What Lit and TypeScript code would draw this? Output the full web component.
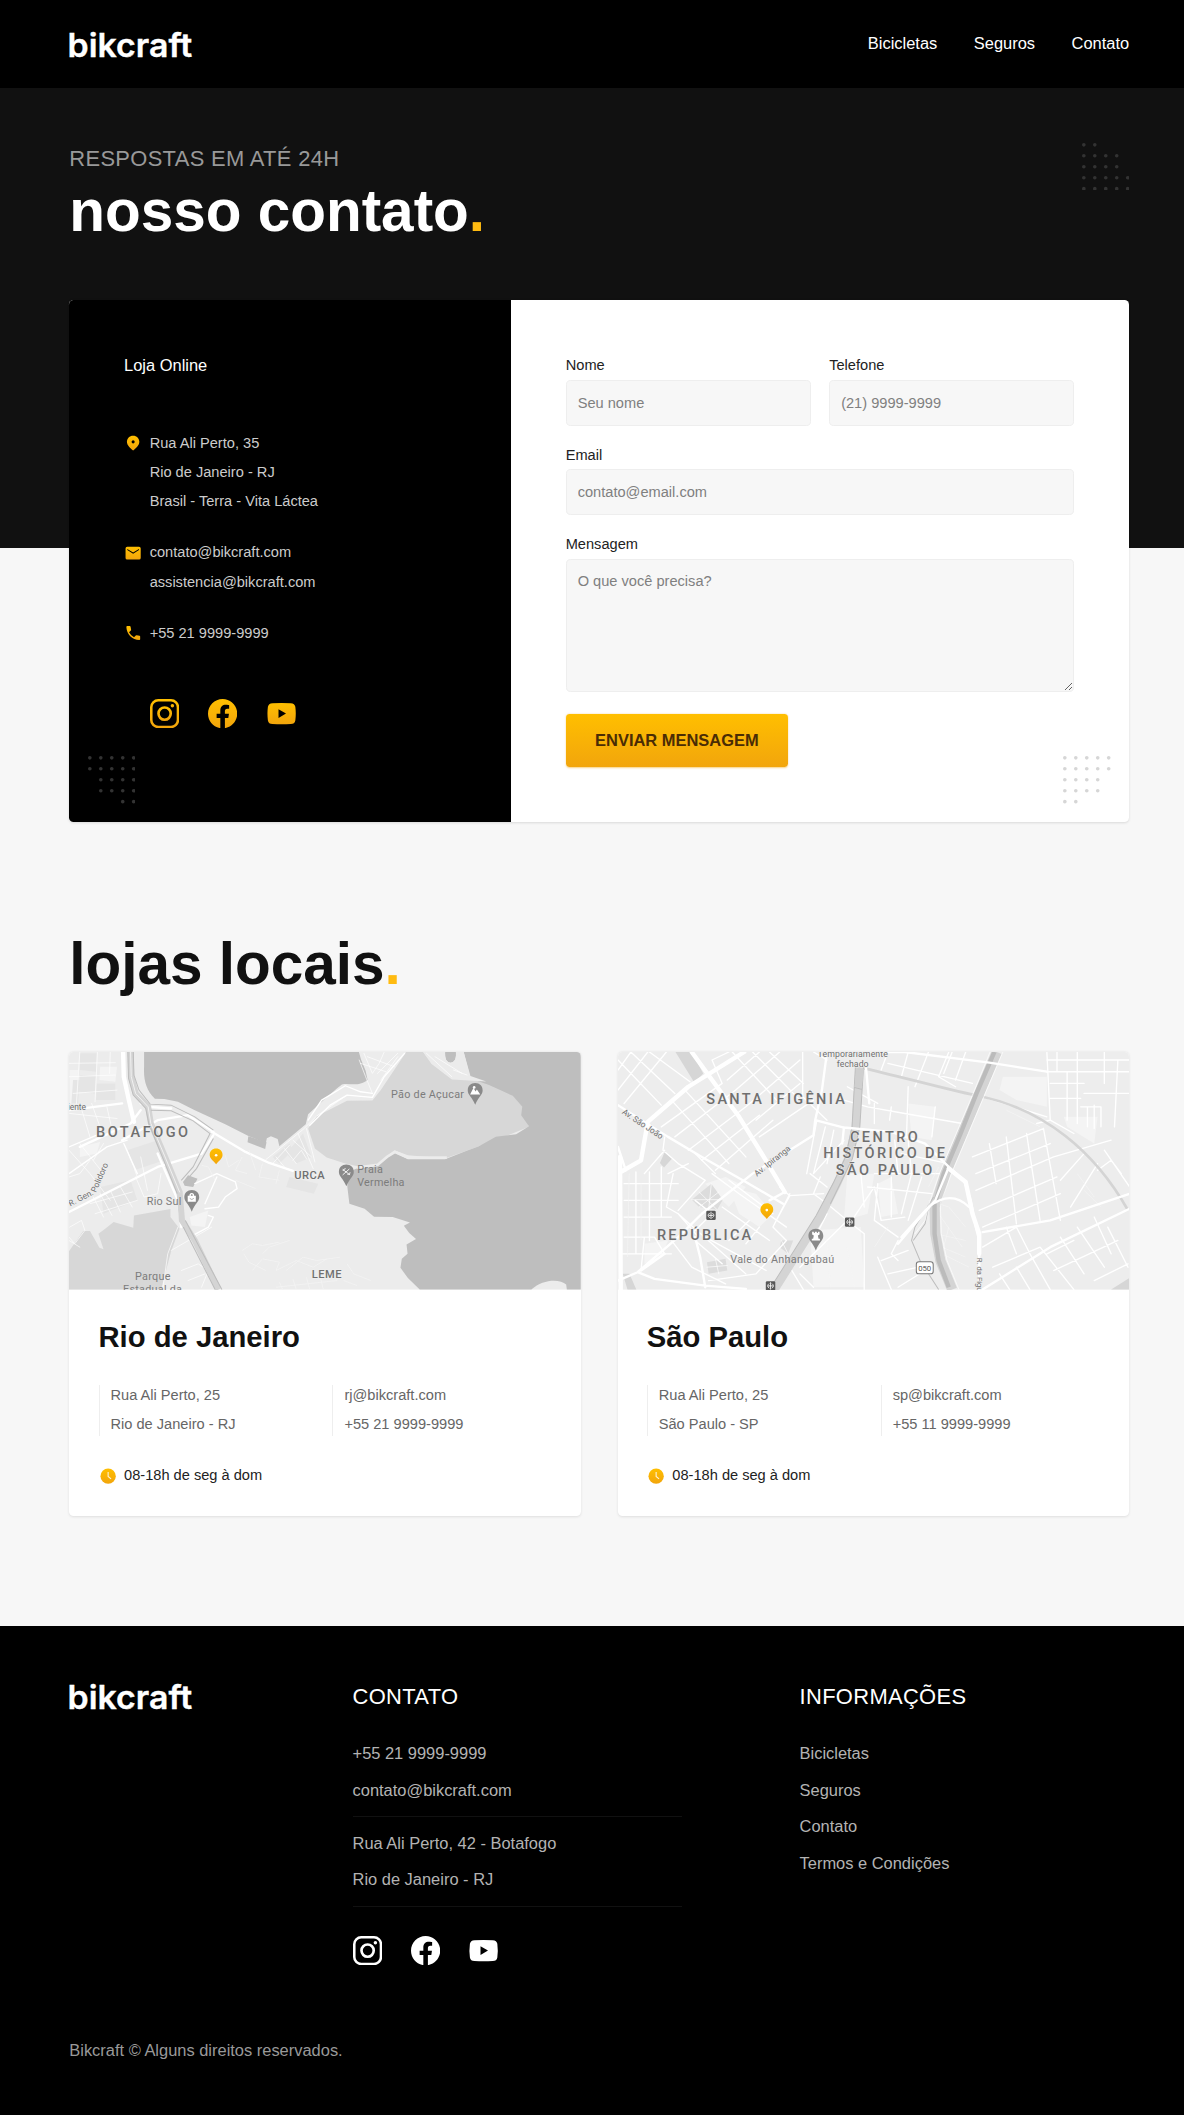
import { LitElement, html, svg, css } from "lit";
import { customElement, property } from "lit/decorators.js";

const goldGradient = svg`<defs>
  <linearGradient id="gold" x1="0" y1="0" x2="0" y2="1">
    <stop offset="0" stop-color="#ffbf00"></stop>
    <stop offset="1" stop-color="#f2a50c"></stop>
  </linearGradient>
</defs>`;

@customElement("bik-logo")
export class BikLogo extends LitElement {
  static styles = css`
    :host { display: block; }
    svg { display: block; overflow: visible; }
    .word { font: 600 36px Inter, "Liberation Sans", sans-serif; fill: #fff; stroke: #fff; stroke-width: 0.4; }
  `;
  render() {
    return html`<svg width="136" height="32" viewBox="0 0 136 32" role="img">
      <text class="word" x="-1.6" y="29.5" textLength="136.5" lengthAdjust="spacingAndGlyphs">bikcraft</text>
    </svg>`;
  }
}

/** Triangular dot ornament; each row is [first column, column count]. */
@customElement("bik-dots")
export class BikDots extends LitElement {
  static styles = css`
    :host { display: block; width: 52px; height: 52px; }
    svg { display: block; fill: currentColor; }
  `;
  @property({ attribute: false }) rows: [number, number][] = [];
  render() {
    return html`<svg width="52" height="52" viewBox="0 0 52 52">
      ${this.rows.map(([start, count], r) =>
        Array.from({ length: count }, (_, i) =>
          svg`<circle cx=${2 + (start + i) * 12} cy=${2 + r * 12} r="2"></circle>`
        )
      )}
    </svg>`;
  }
}

@customElement("bik-social")
export class BikSocial extends LitElement {
  static styles = css`
    :host { display: flex; gap: 32px; }
    svg { display: block; width: 32px; height: 32px; }
    .ink { fill: currentColor; }
    .line { fill: none; stroke: currentColor; }
    .gold { fill: url(#gold); }
    .gold-line { fill: none; stroke: url(#gold); }
  `;
  @property({ type: Boolean }) gold = false;
  render() {
    const fill = this.gold ? "gold" : "ink";
    const line = this.gold ? "gold-line" : "line";
    return html`
      <svg viewBox="0 0 32 32">${goldGradient}
        <rect class=${line} x="1.4" y="1.4" width="29.2" height="29.2" rx="7.6" stroke-width="2.8"></rect>
        <circle class=${line} cx="16" cy="16" r="6.7" stroke-width="2.9"></circle>
        <circle class=${fill} cx="24.5" cy="7.5" r="1.9"></circle>
      </svg>
      <svg viewBox="0 0 24 24">${goldGradient}
        <path class=${fill} d="M24 12.073c0-6.627-5.373-12-12-12s-12 5.373-12 12c0 5.99 4.388 10.954 10.125 11.854v-8.385H7.078v-3.47h3.047V9.43c0-3.007 1.792-4.669 4.533-4.669 1.312 0 2.686.235 2.686.235v2.953H15.83c-1.491 0-1.956.925-1.956 1.874v2.25h3.328l-.532 3.47h-2.796v8.385C19.612 23.027 24 18.062 24 12.073z"></path>
      </svg>
      <svg viewBox="0 0 32 32">${goldGradient}
        <path class=${fill} fill-rule="evenodd" d="M6 4.6Q16 4 26 4.6Q30.4 4.8 31 8.6Q32 16 31 23.4Q30.4 27.2 26 27.4Q16 28 6 27.4Q1.600 27.200 1 23.400Q0 16 1 8.600Q1.600 4.800 6 4.600ZM12.600 11.200V20.800L20.800 16Z"></path>
      </svg>`;
  }
}

@customElement("bik-icon")
export class BikIcon extends LitElement {
  static styles = css`
    :host { display: block; width: 20px; height: 20px; }
    svg { display: block; width: 20px; height: 20px; }
    .gold { fill: url(#gold); }
    .hands { fill: none; stroke: #fff; stroke-width: 1.2; stroke-opacity: 0.85; }
  `;
  @property() name = "";
  render() {
    const shapes: Record<string, unknown> = {
      pin: svg`<path class="gold" fill-rule="evenodd" d="M10 1.800C6 1.800 3.200 4.800 3.200 8.500C3.200 12.600 7.200 15.800 10 18.200C12.800 15.800 16.800 12.600 16.800 8.500C16.800 4.800 14 1.800 10 1.800ZM10 6.900A1.700 1.700 0 1 1 10 10.300A1.700 1.700 0 1 1 10 6.900Z"></path>`,
      mail: svg`<path class="gold" fill-rule="evenodd" d="M3.500 3H16.500A1.800 1.800 0 0 1 18.300 4.800V15.200A1.800 1.800 0 0 1 16.500 17H3.500A1.800 1.800 0 0 1 1.700 15.200V4.800A1.800 1.800 0 0 1 3.500 3ZM3.600 5.400V6.700L10 10.600L16.400 6.700V5.400L10 9.200Z"></path>`,
      phone: svg`<path class="gold" d="M2.600 3.200Q2.600 2.300 3.500 2.300H6.300Q7 2.300 7.200 3L7.800 6.200Q7.900 6.800 7.500 7.200L5.500 9.100Q7.500 12.700 11 14.600L12.900 12.600Q13.300 12.200 13.900 12.300L17 12.900Q17.700 13.100 17.700 13.800V16.600Q17.700 17.500 16.800 17.500C9 17.300 2.800 11 2.600 3.200Z"></path>`,
      clock: svg`<circle class="gold" cx="10" cy="10" r="8.400"></circle><path class="hands" d="M10 5.500V10.300L13.200 13"></path>`,
    };
    return html`<svg viewBox="0 0 20 20">${goldGradient}${shapes[this.name]}</svg>`;
  }
}

const mapStyles = css`
  :host { display: block; height: 260px; overflow: hidden; }
  svg { display: block; width: 100%; height: 100%; font-family: Roboto, "Liberation Sans", sans-serif; }
  .road { fill: none; stroke: #fff; stroke-linejoin: round; stroke-linecap: round; }
  .r1 { stroke-width: 2; }
  .r2 { stroke-width: 4; }
  .r3 { stroke-width: 7; }
  .r4 { stroke-width: 13; }
  .faint { fill: none; stroke: #f5f5f5; stroke-width: 2; }
  .gray { fill: none; stroke: #d4d4d4; }
  .dark { fill: none; stroke: #bdbdbd; stroke-width: 3; }
  .water { fill: #bebebe; }
  .hill { fill: #d7d7d7; }
  .patch { fill: #e5e5e5; }
  .light { fill: #f4f4f4; }
  .label { fill: #6f6f6f; stroke: #f0f0f0; stroke-width: 3; paint-order: stroke; }
  .poi { fill: #7c7c7c; }
  .bold { font-weight: 500; }
  .marker { fill: #8a8a8a; }
  .glyph { fill: #fff; }
  .gold { fill: url(#gold); }
  .metro { fill: #585858; }
  .metro-line { fill: none; stroke: #fff; stroke-width: 2.500; }
  .shield { fill: #fff; stroke: #777; stroke-width: 3; }
`;

const goldPin = (x: number, y: number) => svg`
  <g transform="translate(${x} ${y})">
    <path class="gold" d="M0 -22C-11 -22 -19 -14 -19 -3C-19 8 -8 14 0 25C8 14 19 8 19 -3C19 -14 11 -22 0 -22Z"></path>
    <circle class="glyph" cx="0" cy="-2" r="4"></circle>
  </g>`;

const grayPin = (x: number, y: number, glyph: unknown) => svg`
  <g transform="translate(${x} ${y})">
    <path class="marker" d="M0 -22C-13 -22 -22 -13 -22 0C-22 13 -10 18 0 43C10 18 22 13 22 0C22 -13 13 -22 0 -22Z"></path>
    ${glyph}
  </g>`;

@customElement("map-rio")
export class MapRio extends LitElement {
  static styles = mapStyles;
  render() {
    return html`<svg viewBox="28 36 1513 711" preserveAspectRatio="none">${goldGradient}
      <rect x="28" y="36" width="1513" height="711" fill="#ececec"></rect>
      <path class="light" d="M120 80L170 80 165 125 118 120ZM385 530L440 510 430 560 390 555ZM30 90L55 90 50 190 30 190ZM60 320L120 305 110 340 60 350Z"></path>
      <path class="patch" d="M60 40L110 40 108 95 60 90ZM60 105L108 108 104 160 58 155ZM110 130L165 130 165 180 108 180ZM200 330L290 300 310 360 220 390ZM120 440L210 420 230 480 130 520ZM680 410L765 430 752 460 670 440ZM670 340L720 280 745 350 700 370ZM630 350L680 310 690 330 650 370ZM40 120L60 120 55 190 35 190Z"></path>
      <path class="hill" d="M1025 36L1075 36 1100 70 1160 115 1260 120 1340 165 1368 200 1388 260 1330 284 1240 318 1140 355 1030 345 990 330 940 372 880 378 840 368 790 352 755 325 735 265 760 228 850 182 925 181 950 150Z"></path>
      <path class="water" d="M250 36H885L892 60 905 92 911 120C880 142 860 128 835 133C800 160 760 200 735 222L728 252 650 318 645 296 625 288 613 294 610 308 560 288 490 252 400 210 350 185 310 177 282 176C256 150 248 120 250 80Z"></path>
      <path class="water" d="M1195 36H1541V747H1500L1498 732C1480 715 1430 715 1395 747H1065L1030 712 1008 682 1012 655 1029 640 1026 612 1054 596 1034 578 1018 556 1036 546 985 530 930 529 902 505 857 490 851 440 850 405C870 378 900 384 940 376L968 352 992 338 1030 357 1140 357 1200 333 1240 318 1290 290 1350 282 1388 258 1365 225 1368 200 1340 167 1270 135 1215 115Z"></path>
      <path class="water" d="M1140 36H1172Q1175 66 1156 68Q1138 66 1140 36ZM365 425L380 405 408 415 395 440 370 436ZM558 288L612 306 608 326 556 306Z"></path>
      <path d="M880 382L940 374 968 350 992 335 1030 352 1145 352" fill="none" stroke="#ececec" stroke-width="8" stroke-linejoin="round"></path>
      <path d="M1075 36L1100 72 1160 118 1262 124 1215 108 1195 36H1172Q1175 66 1156 68Q1138 66 1140 36Z" fill="#ebebeb"></path>
      <path class="hill" d="M28 632L70 572 90 572 118 622 130 626 115 580 135 565 160 545 218 562 220 525 328 506 328 530 355 565 330 632 300 747H28Z"></path>

      <path class="road r1" d="M60 36L50 190M112 36L105 185M150 36L148 100M28 70L165 68M28 110L165 105M40 160L170 150M30 220L170 235M60 190L90 290M95 190L130 290M140 200L160 290M28 330L90 400 150 480M60 310L130 400M90 360L60 400 28 410M130 310L100 360M100 470L130 530M120 460L155 525M150 450L180 515M180 440L215 500M90 490L215 455M105 520L230 480M225 410L250 470 290 460 300 400M240 350L260 450M200 330L230 410M30 560L65 540 75 570 45 610 28 590M28 600L60 620M330 630L450 560M350 560L320 640 305 747M360 690L410 670 440 690 420 740M380 720L430 700"></path>
      <path class="road r1" d="M610 358L720 268 760 228 850 165M640 350L665 380M665 325L700 370M690 300L745 350M705 280L750 385M730 265L755 365M630 370L680 315M690 360L715 330 730 355M886 60L905 110 925 160M900 40L925 100 945 70 960 36M890 70L965 95M910 50L990 80M940 100L1000 40M1000 50L950 120M1085 40L1160 110M1110 50L1190 100M1165 90L1205 105"></path>
      <path class="road r2" d="M400 430L465 400 520 425 525 445 490 470 470 500 430 505M430 490L465 410M440 525L455 530 440 560 385 590M28 320L110 285M28 400L140 320 200 300M190 310L230 400"></path>
      <path class="road r2" d="M735 240L775 180 845 137 890 155 925 160M740 255L800 195 850 165 925 172 960 110 1020 40"></path>
      <path class="road r3" d="M28 515L290 380 420 340 455 285M28 210L185 190M185 300L290 240 380 225 455 275M60 320L210 250 240 210M290 340L350 480 360 560"></path>
      <path class="road r4" d="M188 36L190 110 205 180 220 245"></path>
      <path class="road r3" d="M450 275L550 335 620 368 690 392M240 190L265 200 330 205"></path>
      <path class="gray" stroke-width="18" d="M210 36L212 110 225 160 262 200 270 250 310 345 355 455 362 540 400 600 470 747"></path>
      <path class="dark" d="M202 36L204 115 218 165 255 205 264 250 304 350 348 460 M366 560L460 747M372 540L480 747M218 36L220 105 235 150 268 192 330 195 400 230 455 270M270 210L330 212 395 242 445 280 395 380 360 420M455 295L405 385 370 425"></path>
      <path class="road r1" d="M210 36L212 110 225 160 262 200 270 250 310 345 355 455"></path>
      <path class="faint" d="M460 420L440 380 420 375M490 345L500 380 530 360M540 350L520 390 555 400M560 330L580 390M520 420L580 445M600 370L590 410 650 420M650 390L640 430M540 630L570 610 600 615 650 605M545 640L560 665 610 690M570 690L600 655 650 665 640 690 700 660 750 680 790 655M600 640L620 620 680 600M670 690L720 650 760 660 830 650M850 670L870 700 920 720M640 740L820 720 825 700M650 725L660 747M690 715L700 747M730 710L740 747M770 705L780 747M840 720L880 735"></path>

      <text class="label bold" x="108" y="290" font-size="43" textLength="272">BOTAFOGO</text>
      <text class="label bold" x="694" y="417" font-size="33" textLength="90">URCA</text>
      <text class="label bold" x="746" y="711" font-size="33" textLength="88">LEME</text>
      <text class="poi" x="980" y="173" font-size="32" textLength="216">Pão de Açucar</text>
      <text class="poi" x="880" y="399" font-size="32" textLength="76">Praia</text>
      <text class="poi" x="880" y="437" font-size="32" textLength="140">Vermelha</text>
      <text class="poi" x="258" y="494" font-size="32" textLength="102">Rio Sul</text>
      <text class="poi" x="223" y="719" font-size="32" textLength="105">Parque</text>
      <text class="poi" x="188" y="757" font-size="32" textLength="174">Estadual da</text>
      <text class="label" x="24" y="210" font-size="25">iente</text>
      <text class="label" font-size="25" transform="translate(32 498) rotate(-27)">R. Gen.</text>
      <text class="label" font-size="25" transform="translate(108 458) rotate(-67)">Polidoro</text>
      ${grayPin(1229, 151, svg`<path class="glyph" d="M-15 12L-5 -8L1 3L5 -3L15 12Z"></path><circle class="glyph" cx="-3" cy="-9" r="4"></circle>`)}
      ${grayPin(848, 395, svg`<path d="M-11 9L9 -9M-11 -8L11 9M-10 -3A9 9 0 0 1 -2 -10M3 7A6 6 0 0 0 11 1" fill="none" stroke="#fff" stroke-width="2.6"></path>`)}
      ${grayPin(391, 471, svg`<path class="glyph" d="M-12 -5H12V13H-12ZM-7 -5A7 8 0 0 1 7 -5H3A3 4 0 0 0 -3 -5Z"></path><path d="M-6 3Q0 10 6 3" fill="none" stroke="#8a8a8a" stroke-width="2"></path>`)}
      ${goldPin(463, 347)}
    </svg>`;
  }
}

@customElement("map-sampa")
export class MapSampa extends LitElement {
  static styles = mapStyles;
  render() {
    const metro = (x: number, y: number) => svg`<g transform="translate(${x} ${y})">
      <rect class="metro" x="-14" y="-14" width="28" height="28" rx="4"></rect>
      <path class="metro-line" d="M0 -11V11M-4 -7Q-13 0 -4 7M4 -7Q13 0 4 7M-7 0H7"></path></g>`;
    return html`<svg viewBox="22 36 1513 711" preserveAspectRatio="none">${goldGradient}
      <rect x="22" y="36" width="1513" height="711" fill="#ededed"></rect>
      <path class="light" d="M1160 110L1290 110 1290 200 1200 180 1150 150ZM350 440L430 460 480 520 440 560 380 520ZM590 570L740 560 750 740 600 740ZM790 430L830 410 850 520 800 530ZM280 430L340 410 400 440 350 500ZM1340 230L1440 230 1430 310 1350 260ZM880 190L960 200 950 300 890 290ZM100 610L170 600 150 650 100 670ZM700 400L780 400 760 520 690 540Z"></path>
      <path d="M192 36L240 36 274 100 248 128ZM36 700L56 700 76 747 50 747ZM1480 747L1535 712V747ZM160 335L182 355 158 382 146 368Z" fill="#d6d6d6"></path>
      <path d="M240 478L298 430 332 478 315 508 262 500ZM505 600L540 600 525 640 500 620ZM285 665L340 655 345 690 290 700Z" fill="#dcdcdc"></path>
      <path class="road r1" d="M240 478L332 478M298 430L290 508M262 455L315 508M320 455L262 500M505 600L525 640M285 680L345 675M310 655L320 700"></path>

      <path class="road r2" d="M22 90L60 36M22 150L110 36M40 190L165 36M22 60L150 195M60 36L190 160M115 36L235 125M150 260L330 130M190 290L370 150M230 330L400 200M270 360L440 225M310 390L480 240M180 180L350 370M220 150L400 350M330 130L300 60 350 36M345 120L440 36M370 150L500 36M400 200L560 60M430 240L560 130M360 36L500 190M420 36L560 180M470 36L570 130M568 36V170L640 240M440 290L600 180M600 36L640 60"></path>
      <path class="road r2" d="M40 430L200 430M40 480L200 480M40 530L180 530M40 590L130 590M75 395V640M115 395V600M150 380V530M185 400L165 500 200 520 260 590M36 640L180 640M100 400L160 330M160 290L155 330 200 370M200 370L280 420 200 510M250 340L310 400M230 370L170 400M300 400L380 460 520 560M350 420L480 520M330 500L470 600M200 520L400 700M250 480L300 520M280 590L460 690M300 520L240 580M180 600L240 680 340 730M130 590L160 640M100 590L90 690M250 600L330 670M410 540L350 600M440 560L400 610M530 460L480 560 520 600 430 700 290 720M620 410L600 460 640 490M530 466L630 460M500 440L530 466 490 540M590 400L640 440M610 240L580 400M635 260L600 400 690 300M660 270L640 370M690 180L760 200 870 220 1040 250M700 140L790 190M780 190V250M830 200L825 240M880 140L875 290M960 200L950 290M700 560L780 440 800 540 870 530M750 500L740 400M790 430L780 540 850 590M830 410L830 530M890 400L860 520M920 410L880 540M840 300L850 400M880 300L890 400M780 400L980 400M760 440L950 460M860 340L1000 370M640 490L700 540 750 580V747M700 540L560 680M640 520L600 600M560 700L600 740M530 680L570 747M790 650L830 747M800 660L880 630M820 700L910 680M850 740L930 690M850 600L830 640 850 660"></path>
      <path class="road r2" d="M820 36L800 90M880 36L860 110M940 36L900 140M1000 36L970 110 1020 140M820 70L1070 130M1010 36L985 100M1050 36L1020 120M1100 170L1290 230M1290 36L1300 240 1260 250M1290 95H1535M1290 60H1535M1380 36V250M1460 36V130M1500 60L1490 260M1300 130H1400M1300 175H1390M1320 36V95M1350 95V240M1390 200H1450M1400 160H1535M1410 200V260M1430 195V265M1450 200V260M1300 240L1370 280M1070 350L1280 265M1080 400L1300 310M1080 450L1310 350M1090 510L1320 410M1100 560L1330 460M1120 310L1140 430M1170 290L1200 550M1230 280L1270 540M1280 265L1330 540M1310 350L1480 300M1330 420L1400 340M1360 500L1440 370M1100 620L1200 560 1240 640M1130 680L1270 620M1170 560L1200 640M1240 640L1300 747M1270 620L1370 747M1330 590L1400 700M1380 560L1460 680M1430 530L1480 640M1290 640L1370 600M1310 690L1500 600M1470 560L1530 680M1430 720L1530 670M1180 747L1150 700M1240 747L1200 680M1440 390L1480 360 1510 400M1460 330L1535 440"></path>
      <path class="faint" d="M940 480L1000 500 1050 560M970 520L1040 620M1000 560L980 640 1060 680M960 580L1050 600M980 620L1050 650M1170 210L1270 260M970 380L940 440M820 560L780 620M1400 450L1450 500M1380 400L1430 470M55 400L50 650M90 430V600M700 620L720 740M640 600L650 740"></path>

      <path class="gray" stroke-width="8" d="M750 85C900 120 1000 150 1100 170C1280 210 1430 330 1530 510"></path>
      <path class="gray" stroke-width="24" d="M736 80L725 260 705 350 670 430 620 530 485 747"></path>
      <path class="dark" d="M724 80L714 260 695 350 660 425 608 525 470 747M748 80L737 260 715 355 650 490M722 142L744 148"></path>
      <path d="M738 85L732 142" stroke="#cfcfcf" stroke-width="22"></path>
      <path class="gray" stroke-width="30" d="M1142 36L1090 160 1040 280 990 400 958 500 960 580 975 660 1010 747"></path>
      <path d="M1135 36L1082 160 1035 280 985 400 962 480 M958 490L958 580 970 660 1000 740" fill="none" stroke="#bbb" stroke-width="13"></path>
      <path class="dark" d="M940 500L930 550 895 600 M955 470L900 560 890 600 915 660 970 747"></path>
      <path class="road r1" d="M1122 36L1072 160 1022 280 972 400 942 490 930 540 900 580 M1160 36L1108 160 1058 280 1008 400 975 490 978 580 995 660 1030 747"></path>

      <path class="road r4" d="M240 36L300 120 380 230 450 345 515 455M22 400L90 360 110 245 230 140 395 36M28 350L30 747"></path>
      <path class="road r3" d="M22 195L170 290 270 350 400 425 510 490M270 520L420 400 600 285M515 455L470 480M22 320L45 390M640 36L625 150 605 240 600 285M605 240L690 262 830 275M690 262L685 310M22 720L80 695 200 590 270 520M80 695L130 715 280 735 400 745M250 590L265 650 280 740M160 640L90 690"></path>
      <path class="road r3" d="M770 36H870L1120 68 1290 95M755 80L765 190M830 275L930 310 1000 380 1045 420 1065 480 1080 560 1090 600V747M860 590L940 500C990 460 1030 470 1060 500M1100 575L1300 540 1535 460M1100 747L1300 620 1535 505M1000 380L960 480 900 550 850 610"></path>
      <path class="road r4" d="M1000 385L1050 425 1070 520 1090 580 1090 640"></path>

      <text class="label bold" x="283" y="191" font-size="43" textLength="410">SANTA IFIGÊNIA</text>
      <text class="label bold" x="708" y="306" font-size="43" textLength="200">CENTRO</text>
      <text class="label bold" x="629" y="354" font-size="43" textLength="360">HISTÓRICO DE</text>
      <text class="label bold" x="666" y="403" font-size="43" textLength="285">SÃO PAULO</text>
      <text class="label bold" x="137" y="600" font-size="43" textLength="279">REPÚBLICA</text>
      <text class="poi" x="354" y="667" font-size="32" textLength="307">Vale do Anhangabaú</text>
      <text class="label" x="612" y="51" font-size="26" textLength="208">Temporariamente</text>
      <text class="label" x="669" y="81" font-size="26" textLength="94">fechado</text>
      <text class="label" font-size="25" textLength="140" transform="translate(32 219) rotate(34)">Av. São João</text>
      <text class="label" font-size="25" textLength="130" transform="translate(433 409) rotate(-39)">Av. Ipiranga</text>
      <text class="label" font-size="23" transform="translate(1084 652) rotate(90)">R. da Figueira</text>
      ${metro(297, 525)}${metro(707, 545)}${metro(473, 736)}
      <rect class="shield" x="904" y="664" width="50" height="36" rx="8"></rect>
      <text x="910" y="690" font-size="23" textLength="38" fill="#555">050</text>
      ${grayPin(607, 587, svg`<path class="glyph" d="M-11 -13H-6V-9H-3V-13H3V-9H6V-13H11V-5L6 -2L8 8H12V13H-12V8H-8L-6 -2L-11 -5Z"></path>`)}
      ${goldPin(462, 511)}
    </svg>`;
  }
}

interface Store { city: string; address: string[]; contact: string[]; map: unknown; }

const stores: Store[] = [
  { city: "Rio de Janeiro", address: ["Rua Ali Perto, 25", "Rio de Janeiro - RJ"], contact: ["rj@bikcraft.com", "+55 21 9999-9999"], map: html`<map-rio></map-rio>` },
  { city: "São Paulo", address: ["Rua Ali Perto, 25", "São Paulo - SP"], contact: ["sp@bikcraft.com", "+55 11 9999-9999"], map: html`<map-sampa></map-sampa>` },
];

const details = [
  { icon: "pin", lines: ["Rua Ali Perto, 35", "Rio de Janeiro - RJ", "Brasil - Terra - Vita Láctea"] },
  { icon: "mail", lines: ["contato@bikcraft.com", "assistencia@bikcraft.com"] },
  { icon: "phone", lines: ["+55 21 9999-9999"] },
];

@customElement("app-root")
export class AppRoot extends LitElement {
  static styles = css`
    :host { display: block; font-family: "Liberation Sans", Arial, sans-serif; background: #f7f7f7; }
    * { box-sizing: border-box; }
    h1, h2, h3, p { margin: 0; }
    .page { zoom: 0.9138; height: 2314.500px; display: flex; flex-direction: column; }
    .wrap { padding: 0 60px 0 75.800px; }

    .header { background: #000; height: 96.300px; flex: none; display: flex; align-items: center; justify-content: space-between; }
    .header bik-logo { margin-top: 1px; }
    .nav { display: flex; gap: 40px; font-size: 18px; line-height: 24px; color: #fff; }

    .hero { background: #111; height: 503.500px; flex: none; display: flex; justify-content: space-between; align-items: flex-start; padding-top: 60px; }
    .kicker { font-size: 24px; line-height: 32px; letter-spacing: 0.360px; color: #999; margin-top: 1px; }
    .title { font-size: 64px; line-height: 72px; font-weight: 700; }
    .hero .title { color: #fff; margin-top: 5px; }
    .dot { color: #ffbb11; }
    .hero bik-dots { color: #333; }

    .contact { margin-top: -272px; flex: none; }
    .panel { display: grid; grid-template-columns: 483.300px 1fr; height: 571.500px; border-radius: 5px; overflow: hidden; background: #fff; box-shadow: 0 1px 3px rgba(0, 0, 0, 0.12); }
    .store { position: relative; background: #000; padding: 61px 60px 60px; display: flex; flex-direction: column; }
    .store-title { font-size: 18px; line-height: 24px; font-weight: 400; color: #fff; margin-bottom: 56.500px; }
    .details { display: flex; flex-direction: column; gap: 24px; }
    .detail { display: grid; grid-template-columns: 20px 1fr; gap: 8px; font-size: 16px; line-height: 32px; color: #ccc; }
    .detail bik-icon { margin-top: 6px; }
    .store bik-social { margin: 56px 0 0 28px; }
    .store bik-dots { position: absolute; left: 20px; bottom: 20px; color: #333; }
    .form-side { position: relative; padding: 60px; }
    .form-side bik-dots { position: absolute; right: 20px; bottom: 20px; color: #d6d6d6; }
    .form { display: grid; grid-template-columns: 1fr 1fr; column-gap: 20px; row-gap: 20px; }
    .field { display: flex; flex-direction: column; gap: 2px; font-size: 16px; line-height: 26px; color: #222; }
    .wide { grid-column: 1 / -1; }
    .input { display: block; width: 100%; height: 50px; margin: 0; padding: 12px; border: 1px solid #eee; border-radius: 5px; background: #f7f7f7; font: 16px/24px "Liberation Sans", Arial, sans-serif; outline: none; }
    .area { height: 146px; resize: vertical; overflow: auto; }
    .input::placeholder { color: #808080; opacity: 1; }
    .send { justify-self: start; margin: 4px 0 0; width: 243.300px; height: 57.500px; border: 0; border-radius: 4px; padding: 0; background: linear-gradient(#ffbf00, #f2a50c); box-shadow: 0 1px 2px rgba(242, 165, 12, 0.5); color: #4a2c05; font: 700 18px/24px "Liberation Sans", Arial, sans-serif; }

    .local { padding-top: 119px; flex: none; }
    .local .title { color: #111; }
    .stores { display: grid; grid-template-columns: 560px 560px; gap: 40px; margin-top: 61px; }
    .card { background: #fff; border-radius: 5px; overflow: hidden; box-shadow: 0 1px 3px rgba(0, 0, 0, 0.1); }
    .body { padding: 32px; display: flex; flex-direction: column; gap: 32px; }
    .city { font-size: 32px; line-height: 40px; font-weight: 700; color: #111; }
    .info { display: grid; grid-template-columns: 1fr 1fr; gap: 16px; }
    .column { display: flex; flex-direction: column; gap: 8px; border-left: 2px solid #eee; padding-left: 12px; font-size: 16px; line-height: 24px; color: #666; }
    .hours { display: flex; align-items: center; gap: 8px; font-size: 16px; line-height: 24px; color: #222; }

    .footer { flex: 1; margin-top: 120px; background: #000; padding-top: 62px; color: #b3b3b3; font-size: 18px; line-height: 40px; }
    .footer-grid { display: grid; grid-template-columns: 310px 489.200px 1fr; height: 382.500px; }
    .footer-title { font-size: 24px; line-height: 32px; letter-spacing: 0.360px; font-weight: 400; color: #fff; margin-bottom: 25.500px; }
    .group { width: 361px; padding-bottom: 9px; margin-bottom: 8px; border-bottom: 2px solid #111; }
    .footer bik-social { color: #fff; margin-top: 32px; }
    .footer bik-logo { margin-top: -1px; }
    .copy { color: #999; }
  `;

  private renderStore(s: Store) {
    return html`<article class="card">
      ${s.map}
      <div class="body">
        <h3 class="city">${s.city}</h3>
        <div class="info">
          <div class="column">${s.address.map((l) => html`<span>${l}</span>`)}</div>
          <div class="column">${s.contact.map((l) => html`<span>${l}</span>`)}</div>
        </div>
        <div class="hours"><bik-icon name="clock"></bik-icon>08-18h de seg à dom</div>
      </div>
    </article>`;
  }

  render() {
    return html`<div class="page">
      <header class="header wrap">
        <bik-logo></bik-logo>
        <nav class="nav"><span>Bicicletas</span><span>Seguros</span><span>Contato</span></nav>
      </header>

      <section class="hero wrap">
        <div>
          <p class="kicker">RESPOSTAS EM ATÉ 24H</p>
          <h1 class="title">nosso contato<span class="dot">.</span></h1>
        </div>
        <bik-dots .rows=${[[0, 2], [0, 4], [0, 4], [0, 5], [0, 5]]}></bik-dots>
      </section>

      <section class="contact wrap">
        <div class="panel">
          <div class="store">
            <h2 class="store-title">Loja Online</h2>
            <div class="details">
              ${details.map((d) => html`<div class="detail">
                <bik-icon name=${d.icon}></bik-icon>
                <div>${d.lines.map((l) => html`<div>${l}</div>`)}</div>
              </div>`)}
            </div>
            <bik-social gold></bik-social>
            <bik-dots .rows=${[[0, 5], [0, 5], [1, 4], [1, 4], [3, 2]]}></bik-dots>
          </div>
          <div class="form-side">
            <form class="form">
              <label class="field">Nome<input class="input" placeholder="Seu nome"></label>
              <label class="field">Telefone<input class="input" placeholder="(21) 9999-9999"></label>
              <label class="field wide">Email<input class="input" placeholder="contato@email.com"></label>
              <label class="field wide">Mensagem<textarea class="input area" placeholder="O que você precisa?"></textarea></label>
              <button class="send wide" type="button">ENVIAR MENSAGEM</button>
            </form>
            <bik-dots .rows=${[[0, 5], [0, 5], [0, 4], [0, 4], [0, 2]]}></bik-dots>
          </div>
        </div>
      </section>

      <section class="local wrap">
        <h2 class="title">lojas locais<span class="dot">.</span></h2>
        <div class="stores">${stores.map((s) => this.renderStore(s))}</div>
      </section>

      <footer class="footer wrap">
        <div class="footer-grid">
          <bik-logo></bik-logo>
          <div>
            <h3 class="footer-title">CONTATO</h3>
            <div class="group"><div>+55 21 9999-9999</div><div>contato@bikcraft.com</div></div>
            <div class="group"><div>Rua Ali Perto, 42 - Botafogo</div><div>Rio de Janeiro - RJ</div></div>
            <bik-social></bik-social>
          </div>
          <div>
            <h3 class="footer-title">INFORMAÇÕES</h3>
            ${["Bicicletas", "Seguros", "Contato", "Termos e Condições"].map((l) => html`<div>${l}</div>`)}
          </div>
        </div>
        <p class="copy">Bikcraft © Alguns direitos reservados.</p>
      </footer>
    </div>`;
  }
}
